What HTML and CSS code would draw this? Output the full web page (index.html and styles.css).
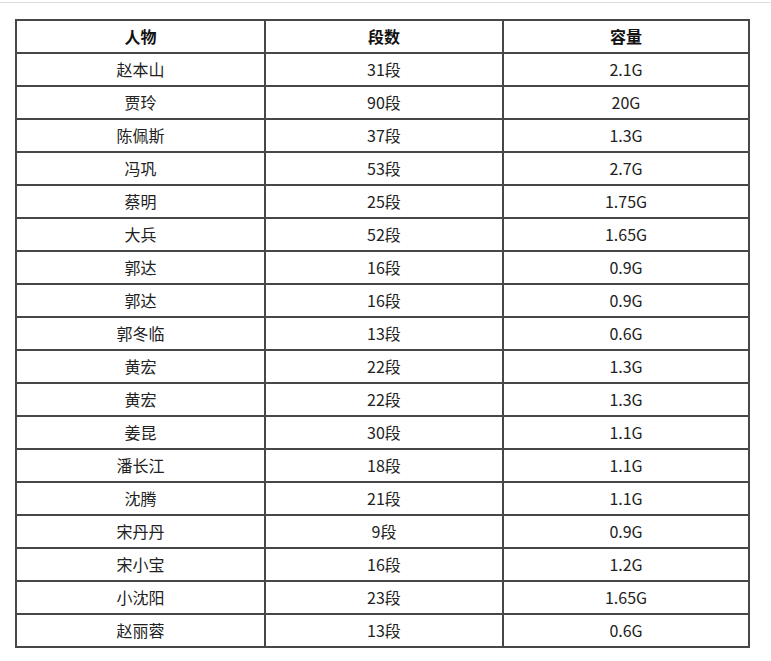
FILE: index.html
```html
<!DOCTYPE html>
<html lang="zh">
<head>
<meta charset="utf-8">
<link rel="stylesheet" href="styles.css">
</head>
<body>
<div class="topline"></div>
<table class="data">
<thead>
<tr><th class="c1">人物</th><th class="c2">段数</th><th class="c3">容量</th></tr>
</thead>
<tbody>
<tr><td>赵本山</td><td>31段</td><td>2.1G</td></tr>
<tr><td>贾玲</td><td>90段</td><td>20G</td></tr>
<tr><td>陈佩斯</td><td>37段</td><td>1.3G</td></tr>
<tr><td>冯巩</td><td>53段</td><td>2.7G</td></tr>
<tr><td>蔡明</td><td>25段</td><td>1.75G</td></tr>
<tr><td>大兵</td><td>52段</td><td>1.65G</td></tr>
<tr><td>郭达</td><td>16段</td><td>0.9G</td></tr>
<tr><td>郭达</td><td>16段</td><td>0.9G</td></tr>
<tr><td>郭冬临</td><td>13段</td><td>0.6G</td></tr>
<tr><td>黄宏</td><td>22段</td><td>1.3G</td></tr>
<tr><td>黄宏</td><td>22段</td><td>1.3G</td></tr>
<tr><td>姜昆</td><td>30段</td><td>1.1G</td></tr>
<tr><td>潘长江</td><td>18段</td><td>1.1G</td></tr>
<tr><td>沈腾</td><td>21段</td><td>1.1G</td></tr>
<tr><td>宋丹丹</td><td>9段</td><td>0.9G</td></tr>
<tr><td>宋小宝</td><td>16段</td><td>1.2G</td></tr>
<tr><td>小沈阳</td><td>23段</td><td>1.65G</td></tr>
<tr><td>赵丽蓉</td><td>13段</td><td>0.6G</td></tr>
</tbody>
</table>
</body>
</html>
```

FILE: styles.css
```css
html, body {
  margin: 0;
  padding: 0;
  background: #ffffff;
}
body {
  font-family: "Noto Sans CJK SC", "Noto Sans", "Liberation Sans", sans-serif;
  color: #222222;
  font-size: 16px;
}
.topline {
  margin-top: 2px;
  height: 1px;
  background: #dedede;
}
.data {
  margin: 16px 0 0 15px;
  border-collapse: collapse;
}
.data th, .data td {
  border: 2px solid #474747;
  text-align: center;
  padding: 0;
  height: 31px;
  line-height: 31px;
}
.data th {
  font-weight: bold;
  color: #111111;
}
.c1 { width: 247px; }
.c2 { width: 236px; }
.c3 { width: 244px; }
```
